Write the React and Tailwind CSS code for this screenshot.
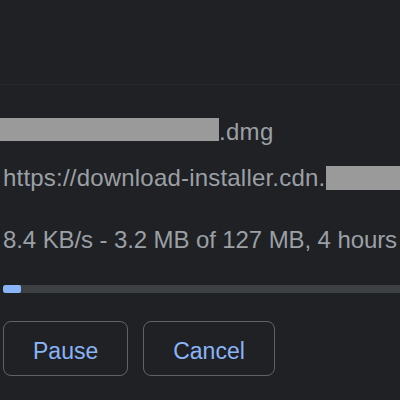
import React from 'react';

export default function App() {
    const progress = 3.2 / 127;

    return (
        <div className="h-[400px] w-[400px] overflow-hidden bg-[#202124] font-['Liberation_Sans',Arial,sans-serif] text-[#9aa0a6]">
            <div className="h-[85px] border-b border-[#27282b]"></div>

            <div className="pl-[3px] pt-[33px]">
                <div className="-ml-[3px] flex h-[28px] items-start whitespace-nowrap text-[24px] leading-[28px]">
                    <span className="h-[23px] w-[219px] shrink-0 bg-[#9a9a9a]"></span>
                    <span className="tracking-[0.3px]">.dmg</span>
                </div>

                <div className="mt-[18px] flex h-[28px] items-start whitespace-nowrap text-[24px] leading-[28px]">
                    <span className="tracking-[0.2px]">https://download-installer.cdn.</span>
                    <span className="ml-[1px] mt-[2px] h-[24px] w-[100px] shrink-0 bg-[#9a9a9a]"></span>
                </div>

                <div className="mt-[34px] h-[28px] whitespace-nowrap text-[24px] leading-[28px] tracking-[-0.1px]">
                    8.4 KB/s - 3.2 MB of 127 MB, 4 hours
                </div>

                <div className="mt-[31px] h-[8px] w-full overflow-hidden rounded-l-[2px] bg-[#3c4043]">
                    <div className="h-full rounded-[2px] bg-[#8ab4f8]" style={{ width: `${Math.max(progress * 100, 4.5)}%` }}></div>
                </div>

                <div className="mt-[28px] flex gap-[15px]">
                    <button className="h-[55px] rounded-[8px] border-[1.5px] border-[#5f6368] px-[29px] pt-[5px] text-[23px] font-medium leading-[28px] text-[#8ab4f8]">
                        Pause
                    </button>
                    <button className="h-[55px] rounded-[8px] border-[1.5px] border-[#5f6368] px-[29px] pt-[5px] text-[23px] font-medium leading-[28px] text-[#8ab4f8]">
                        Cancel
                    </button>
                </div>
            </div>
        </div>
    );
}
